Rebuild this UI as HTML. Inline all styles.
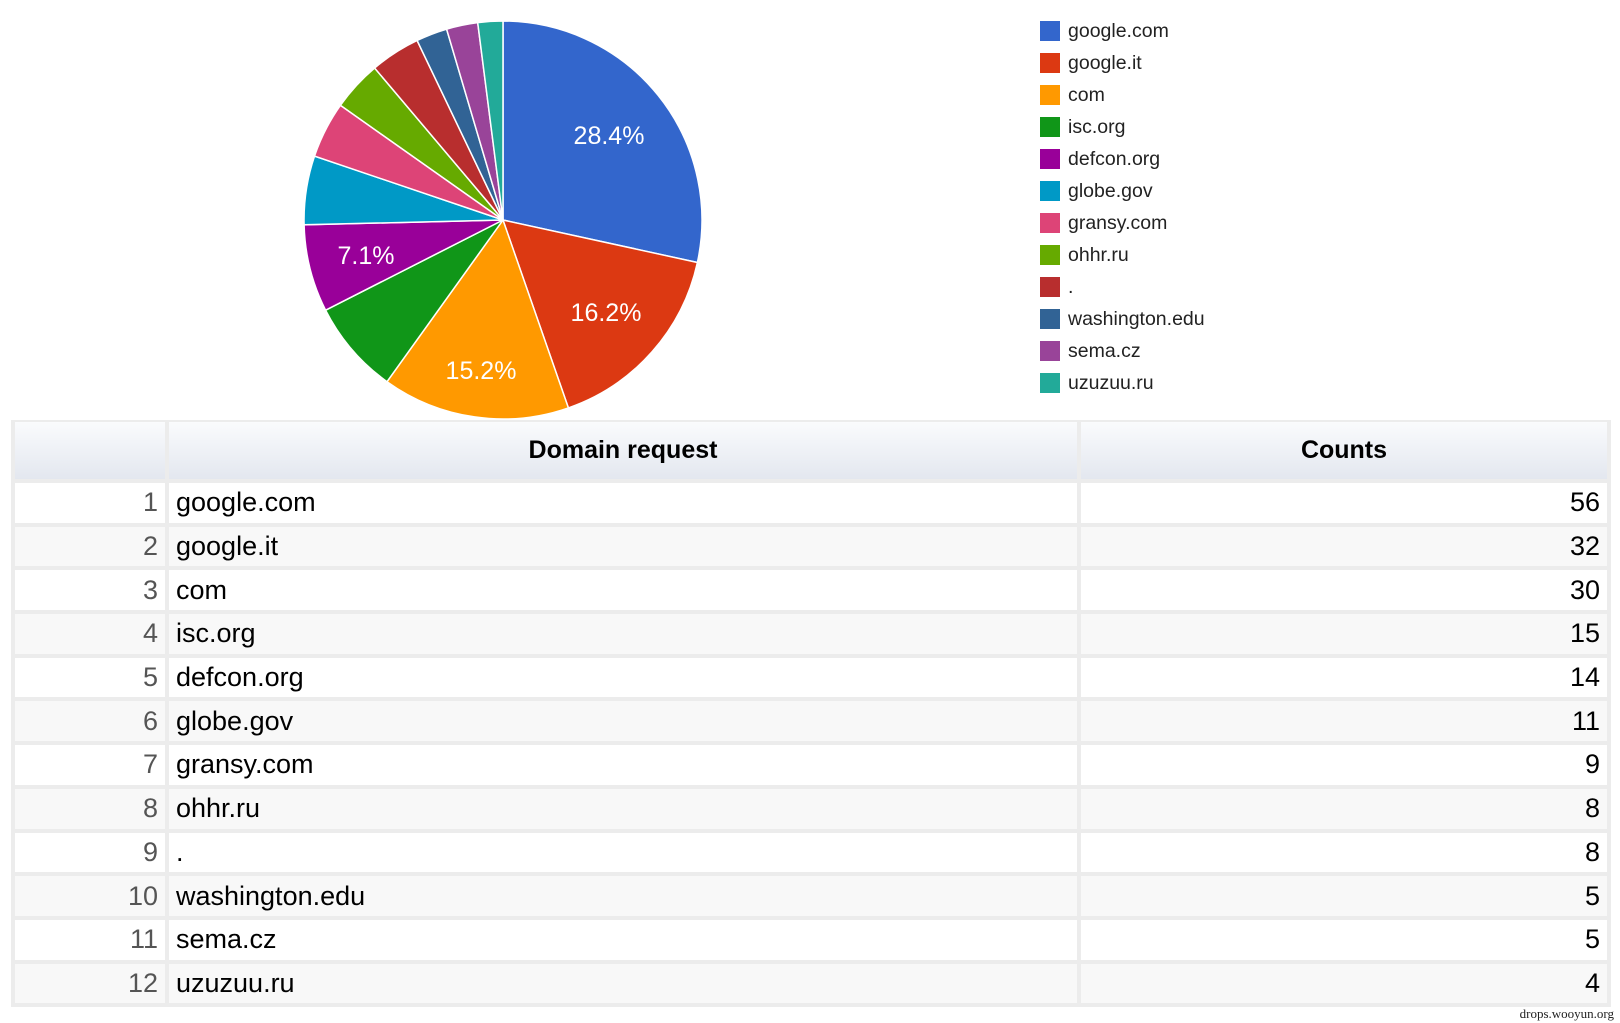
<!DOCTYPE html>
<html><head><meta charset="utf-8"><style>
body{margin:0;width:1620px;height:1023px;background:#fff;position:relative;overflow:hidden;font-family:"Liberation Sans",Arial,sans-serif;}
.lg{position:absolute;left:1040px;font-size:19.5px;color:#222;}
.lg i{position:absolute;left:0;top:1px;width:20px;height:20px;}
.lg span{position:absolute;left:28px;top:0px;white-space:nowrap;line-height:22px;}
table{position:absolute;left:11px;top:420px;width:1600px;border-collapse:collapse;font-size:27px;color:#000;}
td,th{border:4px solid #ececec;padding:0 7px;height:39.7px;}
th{height:57px;font-size:25px;background:linear-gradient(#fafbfd,#e3e7ef);border-top:2px solid #ececec;}
td.n{text-align:right;color:#555;width:136px;}
td.c{text-align:right;width:512px;}
tr:nth-child(even) td{background:#f8f8f8}
tr:nth-child(odd) td{background:#fff}
.wm{position:absolute;right:6px;top:1006px;font-family:"Liberation Serif",serif;font-size:13px;color:#222;}
</style></head><body>
<svg width="1020" height="420" style="position:absolute;left:0;top:0">
<g stroke="#fff" stroke-width="1.5">
<path d="M503 220 L503 21 A199 199 0 0 1 697.4 262.5Z" fill="#3366cc"/>
<path d="M503 220 L697.4 262.5 A199 199 0 0 1 568.4 407.9Z" fill="#dc3912"/>
<path d="M503 220 L568.4 407.9 A199 199 0 0 1 387.0 381.7Z" fill="#ff9900"/>
<path d="M503 220 L387.0 381.7 A199 199 0 0 1 325.6 310.2Z" fill="#109618"/>
<path d="M503 220 L325.6 310.2 A199 199 0 0 1 304.1 224.8Z" fill="#990099"/>
<path d="M503 220 L304.1 224.8 A199 199 0 0 1 314.5 156.1Z" fill="#0099c6"/>
<path d="M503 220 L314.5 156.1 A199 199 0 0 1 340.4 105.3Z" fill="#dd4477"/>
<path d="M503 220 L340.4 105.3 A199 199 0 0 1 374.6 68.0Z" fill="#66aa00"/>
<path d="M503 220 L374.6 68.0 A199 199 0 0 1 417.1 40.5Z" fill="#b82e2e"/>
<path d="M503 220 L417.1 40.5 A199 199 0 0 1 446.6 29.1Z" fill="#316395"/>
<path d="M503 220 L446.6 29.1 A199 199 0 0 1 477.7 22.6Z" fill="#994499"/>
<path d="M503 220 L477.7 22.6 A199 199 0 0 1 503 21Z" fill="#22aa99"/>
</g>
<g fill="#fff" font-family="Liberation Sans, sans-serif" font-size="25" text-anchor="middle">
<text x="609" y="144">28.4%</text>
<text x="606" y="321">16.2%</text>
<text x="481" y="379">15.2%</text>
<text x="366" y="264">7.1%</text>
</g>
</svg>
<div class="lg" style="top:20px"><i style="background:#3366cc"></i><span>google.com</span></div>
<div class="lg" style="top:52px"><i style="background:#dc3912"></i><span>google.it</span></div>
<div class="lg" style="top:84px"><i style="background:#ff9900"></i><span>com</span></div>
<div class="lg" style="top:116px"><i style="background:#109618"></i><span>isc.org</span></div>
<div class="lg" style="top:148px"><i style="background:#990099"></i><span>defcon.org</span></div>
<div class="lg" style="top:180px"><i style="background:#0099c6"></i><span>globe.gov</span></div>
<div class="lg" style="top:212px"><i style="background:#dd4477"></i><span>gransy.com</span></div>
<div class="lg" style="top:244px"><i style="background:#66aa00"></i><span>ohhr.ru</span></div>
<div class="lg" style="top:276px"><i style="background:#b82e2e"></i><span>.</span></div>
<div class="lg" style="top:308px"><i style="background:#316395"></i><span>washington.edu</span></div>
<div class="lg" style="top:340px"><i style="background:#994499"></i><span>sema.cz</span></div>
<div class="lg" style="top:372px"><i style="background:#22aa99"></i><span>uzuzuu.ru</span></div>
<table>
<thead><tr><th></th><th>Domain request</th><th>Counts</th></tr></thead>
<tbody>
<tr><td class="n">1</td><td>google.com</td><td class="c">56</td></tr>
<tr><td class="n">2</td><td>google.it</td><td class="c">32</td></tr>
<tr><td class="n">3</td><td>com</td><td class="c">30</td></tr>
<tr><td class="n">4</td><td>isc.org</td><td class="c">15</td></tr>
<tr><td class="n">5</td><td>defcon.org</td><td class="c">14</td></tr>
<tr><td class="n">6</td><td>globe.gov</td><td class="c">11</td></tr>
<tr><td class="n">7</td><td>gransy.com</td><td class="c">9</td></tr>
<tr><td class="n">8</td><td>ohhr.ru</td><td class="c">8</td></tr>
<tr><td class="n">9</td><td>.</td><td class="c">8</td></tr>
<tr><td class="n">10</td><td>washington.edu</td><td class="c">5</td></tr>
<tr><td class="n">11</td><td>sema.cz</td><td class="c">5</td></tr>
<tr><td class="n">12</td><td>uzuzuu.ru</td><td class="c">4</td></tr>
</tbody></table>
<div class="wm">drops.wooyun.org</div>
</body></html>
